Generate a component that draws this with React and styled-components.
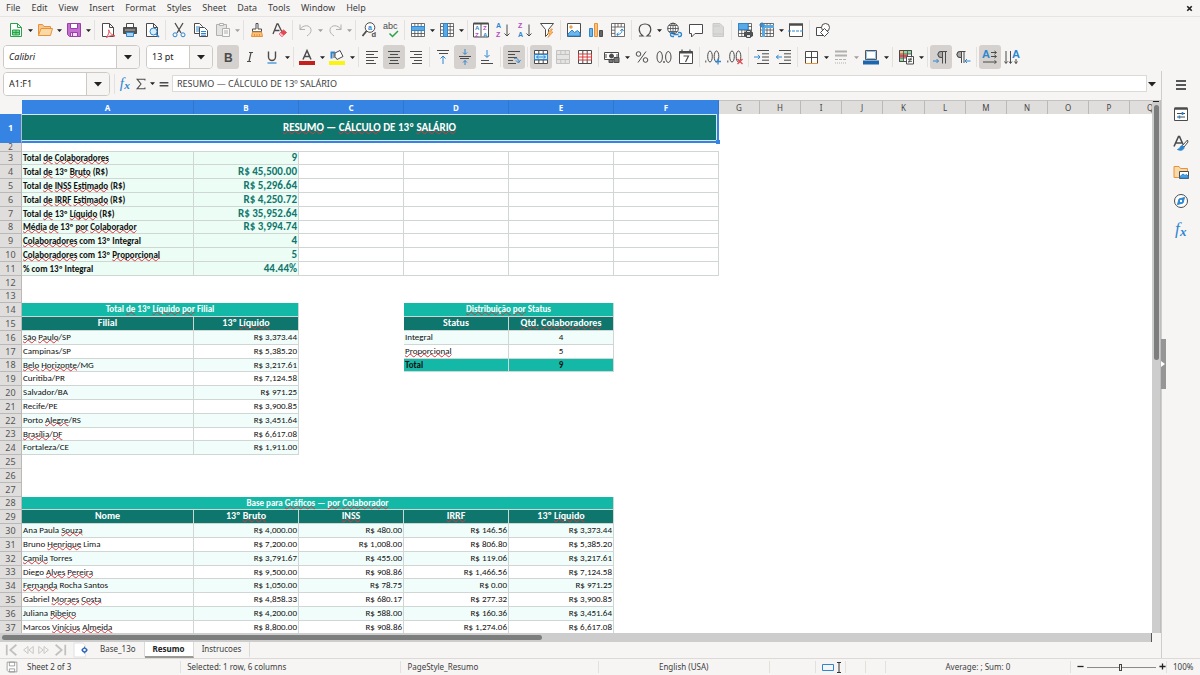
import React from 'react'
import styled, { createGlobalStyle, css } from 'styled-components'

const COLORS = {
  chrome: '#f6f5f4',
  line: '#dcdad7',
  ink: '#3d3d3d',
  blue: '#3584e4',
  iconBlue: '#2d86cf',
  header: '#dfdedd',
  teal: '#0f766e',
  mint: '#14b8a6',
  stripe: '#f0fdfa',
  kpi: '#ecfdf5',
  grid: '#cfd6d4',
  red: '#e0323a',
}

const UI_FONT = "'Noto Sans', 'Open Sans', sans-serif"
const CELL_FONT = "Carlito, Lato, sans-serif"

const GlobalStyle = createGlobalStyle`
  * {
    box-sizing: border-box;
  }
  body {
    margin: 0;
    background: ${COLORS.chrome};
    color: ${COLORS.ink};
    font: 9px/12px ${UI_FONT};
  }
  button, input {
    font: inherit;
    color: inherit;
  }
  button {
    padding: 0;
    border: 0;
    background: none;
  }
`

/* ---------- layout ---------- */

const Window = styled.div`
  display: flex;
  flex-direction: column;
  height: 100vh;
  overflow: hidden;
`

const MenuBar = styled.nav`
  display: flex;
  align-items: center;
  gap: 1px;
  height: 17px;
  flex: none;
  padding-left: 1px;
  border-bottom: 1px solid #e6e4e2;
`

const MenuItem = styled.button`
  padding: 0 5px;
`

const CloseButton = styled.button`
  display: flex;
  margin-left: auto;
  margin-right: 6px;
`

const Toolbar = styled.div`
  display: flex;
  align-items: center;
  flex: none;
  height: ${(p) => (p.$tall ? '28px' : '26px')};
  padding-left: ${(p) => (p.$tall ? '3px' : '5px')};
`

const ToolButton = styled.button`
  display: flex;
  align-items: center;
  justify-content: center;
  flex: none;
  width: 22px;
  height: 24px;
  border-radius: 3px;
  background: ${(p) => (p.$active ? '#d4d1ce' : 'none')};
  opacity: ${(p) => (p.$dim ? 0.4 : 1)};
`

const CaretButton = styled.button`
  display: flex;
  align-items: center;
  justify-content: center;
  flex: none;
  width: ${(p) => (p.$wide ? '8px' : '7px')};
  height: 24px;
  opacity: ${(p) => (p.$dim ? 0.4 : 1)};
`

const Separator = styled.span`
  flex: none;
  width: 1px;
  height: 20px;
  margin: 0 2px;
  background: #e3e1de;
`

const Combo = styled.div`
  display: flex;
  flex: none;
  width: ${(p) => p.$width};
  height: 24px;
  margin-right: ${(p) => p.$gap};
  border: 1px solid #cdc9c5;
  border-radius: 4px;
  background: #fff;
  overflow: hidden;
`

const ComboInput = styled.input`
  flex: 1;
  min-width: 0;
  padding: 0 5px;
  border: 0;
  background: #fff;
  color: #222;
  font-style: ${(p) => (p.$italic ? 'italic' : 'normal')};
`

const ComboButton = styled.button`
  display: flex;
  align-items: center;
  justify-content: center;
  width: 23px;
  border-left: 1px solid #cdc9c5;
  background: ${COLORS.chrome};
`

const Workspace = styled.div`
  display: flex;
  flex: 1;
  min-height: 0;
`

const Main = styled.main`
  display: flex;
  flex-direction: column;
  flex: 1;
  min-width: 0;
`

const FormulaBar = styled.div`
  display: flex;
  align-items: center;
  flex: none;
  height: 29px;
  padding: 0 5px 4px 3px;
`

const FormulaButton = styled.button`
  display: flex;
  align-items: center;
  justify-content: center;
  flex: none;
  width: 16px;
  height: 20px;
`

const FormulaInput = styled.input`
  flex: 1;
  min-width: 0;
  height: 17px;
  margin-right: 1px;
  padding: 0 4px;
  border: 1px solid ${COLORS.line};
  background: #fff;
`

const SheetArea = styled.div`
  display: flex;
  flex: 1;
  min-height: 0;
`

const SheetViewport = styled.div`
  flex: 1;
  min-width: 0;
  overflow: hidden;
  background: #fff;
`

const VerticalScroll = styled.div`
  display: flex;
  flex-direction: column;
  align-items: center;
  flex: none;
  width: 9px;
  padding-top: 1px;
  background: #cdcdcd;
  border-right: 1px solid #bdbdbd;

  &::before {
    content: '';
    width: 6px;
    height: 1px;
    margin-bottom: 3px;
    background: #222;
  }
  &::after {
    content: '';
    width: 5px;
    height: 48%;
    border-radius: 3px;
    background: #7c7d7d;
  }
`

const HorizontalScroll = styled.div`
  display: flex;
  align-items: center;
  flex: none;
  height: 9px;
  margin-right: 9px;
  padding-left: 2px;
  background: #cdcdcd;
  border-right: 1px solid #555;

  &::before {
    content: '';
    width: 47%;
    height: 5px;
    border-radius: 3px;
    background: #7c7d7d;
  }
`

/* ---------- sheet ---------- */

const Sheet = styled.table`
  table-layout: fixed;
  width: 0;
  border-collapse: separate;
  border-spacing: 0;
  font: 9px/12px ${CELL_FONT};
  color: #111;

  th, td {
    padding: 0;
    white-space: nowrap;
  }
`

const ColumnHeader = styled.th`
  height: 14px;
  border-right: 1px solid ${(p) => (p.$selected ? '#2f76cc' : '#bbb9b7')};
  border-top: 1px solid ${(p) => (p.$selected ? COLORS.blue : '#c4c2c0')};
  background: ${(p) => (p.$selected ? COLORS.blue : COLORS.header)};
  color: ${(p) => (p.$selected ? '#fff' : '#444')};
  font-family: ${UI_FONT};
  font-size: 8px;
  font-weight: ${(p) => (p.$selected ? 700 : 400)};
`

const Corner = styled.th`
  background: ${COLORS.chrome};
`

const Row = styled.tr`
  height: ${(p) => p.$height}px;
`

const RowHeader = styled.th`
  border-right: 1px solid #bbb9b7;
  border-bottom: 1px solid ${(p) => (p.$selected ? COLORS.blue : '#bbb9b7')};
  background: ${(p) => (p.$selected ? COLORS.blue : COLORS.header)};
  color: ${(p) => (p.$selected ? '#fff' : '#555')};
  font-family: ${UI_FONT};
  font-size: ${(p) => (p.$short ? '8px' : '9px')};
  line-height: ${(p) => (p.$short ? '8px' : '12px')};
  font-weight: ${(p) => (p.$selected ? 700 : 400)};
  vertical-align: ${(p) => (p.$selected ? 'middle' : 'bottom')};
`

const KINDS = {
  title: css`
    position: relative;
    text-align: center;
    background: ${COLORS.teal};
    color: #fff;
    font-size: 11px;
    font-weight: 700;
    border: 1px solid ${COLORS.blue};
    border-width: 0 2px 2px 0;
    box-shadow: inset 0 1px #d6e9f5, inset -1px -1px #d6e9f5;
    vertical-align: middle;
  `,
  kpiLabel: css`
    background: ${COLORS.kpi};
    font-weight: 700;
    vertical-align: bottom;
  `,
  kpiValue: css`
    background: ${COLORS.kpi};
    color: ${COLORS.teal};
    font-size: 11px;
    font-weight: 700;
    text-align: right;
    vertical-align: bottom;
  `,
  blank: css``,
  ruled: css`
    border-right: 0;
    line-height: 8px;
  `,
  section: css`
    background: ${COLORS.mint};
    color: #fff;
    font-weight: 700;
    text-align: center;
  `,
  head: css`
    background: ${COLORS.teal};
    color: #fff;
    font-size: 10px;
    font-weight: 700;
    text-align: center;
  `,
  text: css``,
  money: css`
    text-align: right;
  `,
  count: css`
    text-align: center;
  `,
  total: css`
    background: ${COLORS.mint};
    font-weight: 700;
  `,
  totalCount: css`
    background: ${COLORS.mint};
    font-weight: 700;
    text-align: center;
  `,
}

const Cell = styled.td`
  && {
    padding: 0 1px;
  }
  border-right: 1px solid ${COLORS.grid};
  border-bottom: 1px solid ${COLORS.grid};
  background: ${(p) => (p.$striped ? COLORS.stripe : '#fff')};
  vertical-align: top;
  ${(p) => KINDS[p.$kind]}
`

const Misspelled = styled.span`
  text-decoration: underline wavy ${COLORS.red} 1px;
  text-decoration-skip-ink: none;
  text-underline-offset: -1px;
`

const FillHandle = styled.span`
  position: absolute;
  right: -3px;
  bottom: -3px;
  width: 4px;
  height: 4px;
  background: ${COLORS.blue};
`

/* ---------- side and bottom ---------- */

const SideBar = styled.aside`
  position: relative;
  display: flex;
  flex-direction: column;
  align-items: center;
  flex: none;
  gap: 5px;
  width: 39px;
  padding-top: 2px;
  border-left: 1px solid #cfcdca;
`

const CollapseHandle = styled.button`
  position: absolute;
  left: -1px;
  top: 268px;
  display: flex;
  align-items: center;
  width: 5px;
  height: 50px;
  background: #969696;
`

const TabBar = styled.div`
  display: flex;
  align-items: stretch;
  flex: none;
  height: 16px;
  padding-left: 4px;
  font-size: 8px;
`

const TabNav = styled.button`
  display: flex;
  align-items: center;
  justify-content: center;
  width: 16px;
  opacity: 0.3;
`

const AddSheet = styled.button`
  display: flex;
  align-items: center;
  margin: 0 4px 0 6px;
`

const Tab = styled.button`
  padding: 0 8px;
  border-right: 1px solid ${COLORS.line};
  border-bottom: 2px solid ${(p) => (p.$active ? '#9a9996' : 'transparent')};
  background: ${(p) => (p.$active ? '#fff' : 'none')};
  color: ${(p) => (p.$active ? '#222' : COLORS.ink)};
  font-weight: ${(p) => (p.$active ? 700 : 400)};
`

const StatusBar = styled.footer`
  display: grid;
  grid-template-columns: 21px 160fr 220fr 197fr 171fr 46px 30px 20px 20px 185fr 96px 33px;
  align-items: center;
  flex: none;
  height: 17px;
  border-top: 1px solid ${COLORS.line};
  font-size: 8px;
`

const StatusItem = styled.div`
  display: flex;
  align-items: center;
  justify-content: ${(p) => (p.$center ? 'center' : 'flex-start')};
  height: 12px;
  padding-left: ${(p) => (p.$center ? '0' : '6px')};
  border-right: ${(p) => (p.$plain ? '0' : `1px solid #e3e1de`)};
  white-space: nowrap;
`

const ZoomSlider = styled.input`
  appearance: none;
  flex: 1;
  min-width: 0;
  height: 10px;
  margin: 0 3px;
  background: none;

  &::-webkit-slider-runnable-track {
    height: 1px;
    background: #8a8a8a;
  }
  &::-webkit-slider-thumb {
    appearance: none;
    width: 3px;
    height: 7px;
    margin-top: -3px;
    border: 1px solid #444;
    background: #eee;
  }
`

/* ---------- icons ---------- */

const K = '#4b4b4b'
const B = COLORS.iconBlue
const R = '#e5484d'
const P = '#b44ac0'
const G = '#2aa34a'
const O = '#e8923a'

const Letter = ({ x, y, size = 8, fill = K, bold, italic, serif, children }) => (
  <text
    x={x}
    y={y}
    fontSize={size}
    fill={fill}
    stroke="none"
    fontFamily={serif ? 'Liberation Serif, serif' : 'Liberation Sans, sans-serif'}
    fontWeight={bold ? 700 : 400}
    fontStyle={italic ? 'italic' : 'normal'}
  >
    {children}
  </text>
)

const Page = <path d="M2.5 1.5h7l4 4v9h-11zM9.5 1.5v4h4" fill="#fff" />
const Grid = (
  <path d="M1.5 1.5h13v13h-13zM1.5 4.5h13M1.5 8h13M1.5 11.5h13M4.8 1.5v13M8 1.5v13M11.2 1.5v13" fill="#fff" strokeWidth=".8" />
)

const ICONS = {
  new: (
    <>
      <path d="M2.5 1.5h7l4 4v9h-11zM9.5 1.5v4h4" fill="#fff" stroke={G} />
      <path d="M4.5 8h7v5h-7zM4.5 10.5h7M8 8v5" fill="#7ed694" stroke={G} />
    </>
  ),
  open: (
    <>
      <path d="M1.5 13.5v-11h4l1.5 2h6.5v2" fill="#f7c88b" stroke={O} />
      <path d="M1.5 13.5l2.5-7h11.5l-2 7z" fill="#fad9a9" stroke={O} />
    </>
  ),
  save: (
    <>
      <path d="M1.5 1.5h13v13h-11l-2-2z" fill="#c46fd0" stroke="#9a3ea8" />
      <path d="M4.5 1.5h7v5h-7z" fill="#fff" stroke="#9a3ea8" />
      <path d="M4.5 10.5h7v4h-7z" fill="#f3dff6" stroke="#9a3ea8" />
      <path d="M6.5 11v3" stroke="#9a3ea8" />
    </>
  ),
  pdf: (
    <>
      {Page}
      <path d="M6.5 15.5c2-3 3-6 2.5-7.5-1-1 0 4 6 6-3-1-6 0-8.5 1.5z" stroke={R} fill="#fff" />
    </>
  ),
  print: (
    <>
      <path d="M4.5 5v-3.5h7v3.5" fill="#fff" />
      <path d="M1.5 5.5h13v6h-13z" fill="#555" />
      <path d="M3 8h10" stroke="#bbb" />
      <path d="M4.5 10.5h7v4h-7z" fill="#a9d4f5" stroke={B} />
    </>
  ),
  preview: (
    <>
      {Page}
      <circle cx="9.5" cy="9.5" r="3.5" fill="#d8edfb" stroke={B} />
      <path d="M12 12l3 3" stroke={B} strokeWidth="1.5" />
    </>
  ),
  cut: (
    <>
      <path d="M4 1l6 10M12 1L6 11" strokeWidth="1.3" />
      <circle cx="4" cy="12.8" r="2" stroke={B} />
      <circle cx="12" cy="12.8" r="2" stroke={B} />
    </>
  ),
  copy: (
    <>
      <path d="M1.5 1.5h5l3 3v7h-8z" fill="#fff" />
      <path d="M3 5h4M3 7h4M3 9h4" stroke={B} />
      <path d="M6.5 5.5h5l3 3v6h-8z" fill="#fff" />
      <path d="M8 9.5h5M8 11.5h5M8 13.2h5" stroke={B} />
    </>
  ),
  paste: (
    <>
      <path d="M1.5 2.5h10v11h-10z" fill="#c9c9c9" />
      <path d="M4.5 1.5h4v2h-4z" fill="#fff" />
      <path d="M7.5 6.5h7v8h-7zM9 9h4M9 11h4" fill="#fff" />
    </>
  ),
  brush: (
    <>
      <path d="M7 1.5h2v5.5h3.5v2.5h-9v-2.5h3.5z" fill="#fff" />
      <path d="M3.5 10h9l1 4.5h-11z" fill="#f9c27f" stroke={O} />
      <path d="M5.5 12v2M8 12v2M10.5 12v2" stroke={O} />
    </>
  ),
  clear: (
    <>
      <path d="M2 12l4-10h1l4 8M3.5 8.5h5" strokeWidth="1.3" />
      <path d="M8 12l4.500-4 3 2.500-4.500 4z" fill={R} stroke={R} />
      <path d="M8 12l1.500-1.300 3 2.600-1.500 1.200z" fill="#fbd" stroke="none" />
    </>
  ),
  undo: <path d="M2 2.5v5h5M2 7.5c3-5 10-5 11 0 .5 3-2 5-4 6.5" />,
  redo: <path d="M14 2.5v5h-5M14 7.5c-3-5-10-5-11 0-.5 3 2 5 4 6.5" />,
  find: (
    <>
      <circle cx="9" cy="5.5" r="4.8" fill="#fff" />
      <path d="M5.5 9L1.5 14" strokeWidth="1.8" />
      <Letter x="7" y="7.5" size="7" fill={B} bold>a</Letter>
      <Letter x="10.5" y="15" size="7.5" bold>d</Letter>
    </>
  ),
  spell: (
    <>
      <Letter x="0" y="7" size="9">abc</Letter>
      <path d="M6.5 11.5l3 3L15 9" stroke={G} strokeWidth="1.5" />
    </>
  ),
  row: (
    <>
      {Grid}
      <path d="M1.5 4.5h13v4h-13z" fill="#5aa9e3" stroke={B} />
    </>
  ),
  column: (
    <>
      {Grid}
      <path d="M4.5 1.5h4v13h-4z" fill="#5aa9e3" stroke={B} />
    </>
  ),
  sort: (
    <>
      <path d="M.5 1.5h15v13.5H.5zM8 1.5v13" fill="#fff" />
      <path d="M.5 1.5h15" strokeWidth="2" />
      <Letter x="2" y="8" size="6" fill={B} bold>A</Letter>
      <Letter x="2" y="14.5" size="6" fill={P} bold>Z</Letter>
      <Letter x="10" y="8" size="6" fill={P} bold>Z</Letter>
      <Letter x="10" y="14.5" size="6" fill={B} bold>A</Letter>
    </>
  ),
  sortAsc: (
    <>
      <Letter x="1" y="6" size="7" fill={B} bold>A</Letter>
      <Letter x="1" y="15" size="7" fill={P} bold>Z</Letter>
      <path d="M12 2.5v11M9.5 11.5l2.5 2.5 2.5-2.5" />
    </>
  ),
  sortDesc: (
    <>
      <Letter x="1" y="6" size="7" fill={P} bold>Z</Letter>
      <Letter x="1" y="15" size="7" fill={B} bold>A</Letter>
      <path d="M12 2.5v11M9.5 11.5l2.5 2.5 2.5-2.5" />
    </>
  ),
  filter: (
    <>
      <path d="M1.5 1.5h13l-5 6v4l-3 3v-7z" fill="#fff" />
      <path d="M12 7l-3.5 4.5h2.5l-2 4 5-5.5h-2.5l2-3z" fill="#fbc27a" stroke={O} strokeWidth=".8" />
    </>
  ),
  image: (
    <>
      <path d="M1.5 1.5h13v13h-13z" fill="#fff" />
      <path d="M2 12l4-4 2.5 2.5 3-2 2.5 2.5v3H2z" fill="#6db6ea" stroke={B} />
      <circle cx="5" cy="5" r="1.2" stroke={O} fill="#fbc27a" />
    </>
  ),
  chart: (
    <>
      <path d="M1.5 6.5h3v8h-3z" fill="#6db6ea" stroke={B} />
      <path d="M6.5 1.5h3v13h-3z" fill="#fbc27a" stroke={O} />
      <path d="M11.5 8.5h3v6h-3z" fill="#666" />
    </>
  ),
  pivot: (
    <>
      <path d="M1.5 1.5h13v13h-13zM1.5 5h13M5 1.5v13M8 1.5v3.5M11.2 1.5v3.5M1.5 8.2H5M1.5 11.4H5" fill="#fff" strokeWidth=".8" />
      <path d="M7 12.5c4 0 5-2 5-5M10.3 9l1.7-2 1.7 2M8.5 10.8l-1.8 1.7 1.8 1.7" stroke={B} />
    </>
  ),
  omega: <path d="M2 14h4c-2.5-2-3.8-4-3.8-6.5C2.2 4 4.5 2 8 2s5.8 2 5.8 5.5C13.8 10 12.5 12 10 14h4" strokeWidth="1.2" />,
  link: (
    <>
      <circle cx="7" cy="6.5" r="5.3" fill="#fff" />
      <path d="M1.5 6.5h11M7 1.2v10.5M3 3.5h8M3 9.5h8" strokeWidth=".8" />
      <ellipse cx="7" cy="6.5" rx="2.5" ry="5.3" strokeWidth=".8" />
      <path d="M8 10.5h-1.5a2 2 0 0 0 0 4H8M12 10.5h1.5a2 2 0 0 1 0 4H12M7.5 12.5h5" stroke={B} strokeWidth="1.3" />
    </>
  ),
  comment: <path d="M1.5 2.5h13v9H7l-3.5 3.5v-3.5h-2z" fill="#fff" />,
  headers: <path d="M3 1.5h7l3.5 3.5v9.5H3zM3 4h7M3 12h10" fill="#b0b0b0" stroke="#888" />,
  printArea: (
    <>
      {Grid}
      <path d="M1.5 1.5h9.5v6H1.5z" fill="#5aa9e3" stroke={B} />
      <path d="M7.5 10.5h8v3.5h-8z" fill="#555" />
      <path d="M9.5 8.5h4v2h-4zM9.5 12.5h4v3h-4z" fill="#cfe7fa" />
    </>
  ),
  freeze: (
    <>
      {Grid}
      <path d="M4 4.5h11M4.5 4v11" stroke="#5aa9e3" strokeWidth="3" />
      <path d="M3 0v6M0 3h6M1 1l4 4M5 1L1 5" stroke={B} strokeWidth=".8" />
    </>
  ),
  split: (
    <>
      <path d="M1.5 2.5h13v12h-13z" fill="#fff" />
      <path d="M1 2.5h14" strokeWidth="2.5" />
      <path d="M0 9h16" stroke={B} strokeDasharray="3 1" />
    </>
  ),
  shapes: (
    <>
      <path d="M1.5 5.5h8v8h-8z" fill="#fff" />
      <circle cx="10.5" cy="5.5" r="4" fill="#fff" />
      <path d="M9.5 6.5l4 4-4 4-4-4z" fill="#fff" />
    </>
  ),
  bold: <Letter x="4" y="12.5" size="12" bold>B</Letter>,
  italic: <path d="M7 3.5h4M5 12.5h4M9 3.5l-2 9" strokeWidth="1.2" />,
  underline: (
    <>
      <path d="M4.5 2.5v5.5a3.5 3.5 0 0 0 7 0v-5.5" strokeWidth="1.4" />
      <path d="M3.5 14h9" stroke={B} strokeWidth="1.2" />
    </>
  ),
  fontColor: (
    <>
      <path d="M4 10.5L8 1.5l4 9M5.5 7.5h5" strokeWidth="1.5" />
      <path d="M0 14h16" stroke="#c4201d" strokeWidth="4" />
    </>
  ),
  highlight: (
    <>
      <path d="M6 4l5-2.5 3 6-6 3-2-3zM5 9V3.5" fill="#fff" />
      <path d="M2.5 9.5v-6h3.5" stroke={B} strokeWidth="2" />
      <path d="M0 14h16" stroke="#fbf410" strokeWidth="4" />
    </>
  ),
  alignLeft: <path d="M2 2.5h12M2 5.5h8M2 8.5h12M2 11.5h8M2 14.5h10" />,
  alignCenter: <path d="M2 2.5h12M4 5.5h8M2 8.5h12M4 11.5h8M3 14.5h10" />,
  alignRight: <path d="M2 2.5h12M6 5.5h8M2 8.5h12M6 11.5h8M4 14.5h10" />,
  alignTop: (
    <>
      <path d="M2 1.5h12M4 4.5h9" />
      <path d="M8 15V7.5M5.5 9.5L8 7l2.5 2.5" stroke={B} />
    </>
  ),
  alignMiddle: (
    <>
      <path d="M2 7.5h12M3 9.5h9" />
      <path d="M8 0v5M6 3.5l2 2 2-2M8 16v-4.5M6 13.5l2-2 2 2" stroke={B} />
    </>
  ),
  alignBottom: (
    <>
      <path d="M2 11.5h8M2 14.5h12" />
      <path d="M8 1v7M5.5 6L8 8.5 10.5 6" stroke={B} />
    </>
  ),
  wrap: (
    <>
      <path d="M2 2.5h12M2 5.5h7M2 8.5h9M2 11.5h5M2 14.5h8" />
      <path d="M8 9.5c3-1 4 0 4.5 3M10 11.5l2.5 2.5 2-3" stroke={B} />
    </>
  ),
  merge: (
    <>
      <path d="M1.5 1.5h13v13h-13zM1.5 5h13M1.5 11h13M5.8 1.5V5M10.2 1.5V5M5.8 11v3.5M10.2 11v3.5" fill="#fff" />
      <path d="M1.5 5.5h13v5h-13z" fill="#d5ebfb" stroke={B} />
      <path d="M3.5 8h9M5.5 6.3L3.5 8l2 1.7M10.5 6.3l2 1.7-2 1.7" stroke={B} />
    </>
  ),
  unmerge: (
    <path d="M1.5 1.5h13v4h-13zM1.5 5.5h13v5h-13zM1.5 10.5h13v4h-13zM5.8 1.5v4M10.2 1.5v4M5.8 10.5v4M10.2 10.5v4" fill="#ccc" stroke="#777" />
  ),
  splitCells: (
    <>
      <path d="M1.5 1.5h13v13h-13zM5.8 1.5V5M10.2 1.5V5M5.8 11v3.5M10.2 11v3.5" fill="#fff" />
      <path d="M1.5 5h13v6h-13zM1.5 8h13M5.8 5v6M10.2 5v6" fill="#fff" stroke="#d23b3b" />
    </>
  ),
  currency: (
    <>
      <path d="M.5 3.5h14v7H.5z" fill="#fff" />
      <circle cx="7.5" cy="7" r="2" fill={K} />
      <path d="M2 5v4M13 5v4" />
      <path d="M5 10.5h4v3H5zM10 8.5h5v5h-5z" fill="#777" />
    </>
  ),
  percent: (
    <>
      <circle cx="4.5" cy="5" r="2.3" />
      <circle cx="11.5" cy="11" r="2.3" />
      <path d="M12 2.5L4 13.5" />
    </>
  ),
  number: (
    <>
      <ellipse cx="3.7" cy="8" rx="2.7" ry="5.5" />
      <ellipse cx="12.3" cy="8" rx="2.7" ry="5.5" />
      <path d="M8 12v2" strokeWidth="1.3" />
    </>
  ),
  date: (
    <>
      <path d="M1.5 2.5h13v12h-13z" fill="#fff" />
      <path d="M1.5 3.5h13" strokeWidth="2" />
      <path d="M4 .5v2.5M12 .5v2.5M5.5 7h5l-3 6" strokeWidth="1.2" />
    </>
  ),
  addDecimal: (
    <>
      <path d="M.8 11.5v2" />
      <ellipse cx="5" cy="7.5" rx="2.3" ry="5.5" />
      <ellipse cx="11.5" cy="7.5" rx="2.3" ry="5.5" />
      <path d="M10 12.5h6M13 9.5v6" stroke={B} strokeWidth="1.3" />
    </>
  ),
  removeDecimal: (
    <>
      <path d="M.8 11.5v2" />
      <ellipse cx="5" cy="7.5" rx="2.3" ry="5.5" />
      <ellipse cx="11.5" cy="7.5" rx="2.3" ry="5.5" />
      <path d="M10.5 10l5 5M15.5 10l-5 5" stroke={R} strokeWidth="1.3" />
    </>
  ),
  indent: (
    <>
      <path d="M3 1.5h12M8 4.8h7M8 8h7M8 11.2h7M3 14.5h12" />
      <path d="M0 8h6M4 5.8L6 8l-2 2.2" stroke={B} />
    </>
  ),
  outdent: (
    <>
      <path d="M3 1.5h12M8 4.8h7M8 8h7M8 11.2h7M3 14.5h12" />
      <path d="M6 8H0M2.5 5.8L.5 8l2 2.2" stroke={B} />
    </>
  ),
  borders: (
    <>
      <path d="M2.5 2.5h12v12h-12zM8.5 2.5v12M2.5 8.5h12" fill="#fff" />
      <path d="M2 14.5h13" stroke={O} />
    </>
  ),
  lineStyle: (
    <>
      <path d="M2 2.5h12M2 6.5h12" strokeWidth="1.8" />
      <path d="M2 10.5h12" strokeDasharray="3 1" />
      <path d="M2 14h12" strokeDasharray="1 1" />
    </>
  ),
  borderColor: (
    <>
      <path d="M2.5 1.5h11v9h-11z" fill="#fff" stroke="#555" />
      <path d="M3.5 2.5h9v7h-9z" stroke="#8cc3ef" />
      <path d="M0 13.5h16" stroke="#1f65ad" strokeWidth="4" />
    </>
  ),
  conditional: (
    <>
      <path d="M1.5 1.5h12v11h-12z" fill="#fff" />
      <path d="M2 2h4v3H2z" fill="#f5c27d" stroke="none" />
      <path d="M6 2h7v3H6zM2 9h4v3H2z" fill="#8edba0" stroke="none" />
      <path d="M2 5.5h8v3H2z" fill={R} stroke="none" />
      <path d="M1.5 1.5h12v11h-12zM1.5 5h12M1.5 9h12M5.5 1.5v11M9.5 1.5v11" strokeWidth=".8" />
      <path d="M8.5 7.5h7v7.5h-7z" fill="#fff" />
      <path d="M10 10.2h4M10 12.3h4M13.3 8.7l-2.6 5" />
    </>
  ),
  ltr: (
    <>
      <path d="M14 2.5H8a3 3 0 0 0 0 6h1M9.5 2.5v12M12.5 2.5v12" />
      <path d="M8 2.5a3 3 0 0 0 0 6h1.5v-6z" fill="#aaa" />
      <path d="M0 12h5.5M3.5 10l2 2-2 2" stroke={B} />
    </>
  ),
  rtl: (
    <>
      <path d="M10.5 2.5H5a3 3 0 0 0 0 6h1.5M6.5 2.5V14M9 2.5V14" />
      <path d="M5 2.5a3 3 0 0 0 0 6h1.5v-6z" fill="#aaa" />
      <path d="M15.5 12H10M12 10l-2 2 2 2" stroke={B} />
    </>
  ),
  horizontalText: (
    <>
      <Letter x="0" y="9" size="11" fill={B} bold>A</Letter>
      <path d="M9 3.5h5M12.5 2l2 1.5-2 1.5M9 7.5h5M12.5 6l2 1.5-2 1.5M1 13h13M12.5 11.5l2 1.5-2 1.5" />
    </>
  ),
  verticalText: (
    <>
      <Letter x="8" y="9" size="11" fill={B} bold>A</Letter>
      <path d="M2 2v12M.5 12.5L2 14.5l1.5-2M6.5 2v12M5 12.5l1.5 2 1.5-2M12 10v4.5M10.5 12.5l1.5 2 1.5-2" />
    </>
  ),
  fx: (
    <>
      <Letter x="2" y="12" size="17" fill={B} italic serif>f</Letter>
      <Letter x="7" y="14" size="13" fill={B} italic serif bold>x</Letter>
    </>
  ),
  sigma: <path d="M12.5 4V2.5h-9L8 8l-4.500 5.500h9V12" strokeWidth="1.200" />,
  equals: <path d="M3 6.5h10M3 10h10" strokeWidth="1.6" />,
  menu: <path d="M3 4h10M3 8h10M3 12h10" strokeWidth="1.6" stroke="#222" />,
  properties: (
    <>
      <path d="M1.5 2.5h13v12h-13z" fill="#fff" />
      <path d="M1.5 2.5h13" strokeWidth="2.5" />
      <path d="M4 7.5h8M4 11h8" />
      <path d="M9.5 6v3M6.5 9.5v3" stroke={B} strokeWidth="1.6" />
    </>
  ),
  styles: (
    <>
      <path d="M1 11.5L5.5 1.5h1l3.5 8M3 8h5.5" strokeWidth="1.6" />
      <path d="M14.5 5l-5 5.5 1.5 1.5 4-5z" fill="#fff" />
      <path d="M9.5 10.5c-3 .5-2 3.5-5 4 3 1.5 7 .5 6.5-2.5z" fill={B} stroke={B} />
    </>
  ),
  gallery: (
    <>
      <path d="M1 13.5v-11h5l1.5 2h7v9z" fill="#fad9a9" stroke={O} />
      <path d="M6.5 7.5h9v7h-9z" fill="#fff" />
      <path d="M7 12.5l3-2.5 2 1.5 1.5-1 1.5 1.5v2H7z" fill="#4b9fe0" stroke={B} />
    </>
  ),
  navigator: (
    <>
      <circle cx="8" cy="8" r="6.5" fill="#fff" />
      <path d="M11.5 4.5l-1.5 5.5-5.5 1.5L6 6z" fill={B} stroke={B} />
      <circle cx="8" cy="8" r="1.2" fill="#fff" stroke="none" />
    </>
  ),
  close: <path d="M4 4l8 8M12 4l-8 8" stroke="#222" strokeWidth="3" />,
  first: <path d="M2 2v12M13 2L6 8l7 6" strokeWidth="2" />,
  previous: <path d="M8 4L3 8l5 4zM14 4L9 8l5 4z" />,
  next: <path d="M2 4l5 4-5 4zM8 4l5 4-5 4z" />,
  last: <path d="M14 2v12M3 2l7 6-7 6" strokeWidth="2" />,
  addSheet: (
    <>
      <path d="M0 0h10l3 3v13H0z" fill="#fff" stroke="#ddd" />
      <circle cx="12" cy="8" r="2.2" stroke="#2b62b8" strokeWidth="1.5" fill="#fff" />
      <path d="M12 4v2M12 10v2M8 8h2M14 8h2" stroke="#2b62b8" />
    </>
  ),
  document: (
    <path d="M1.5 1.5h13v13h-11l-2-2zM4.5 1.5h7v5h-7zM4.5 10.5h7v4h-7z" stroke="#888" fill="#fff" />
  ),
  minus: <path d="M1 8h14" strokeWidth="3" stroke="#222" />,
  plus: <path d="M1 8h14M8 1v14" strokeWidth="3" stroke="#222" />,
}

const IconSvg = styled.svg`
  overflow: visible;
`

const Icon = ({ name, size = 16 }) => (
  <IconSvg width={size} height={size} viewBox="0 0 16 16" fill="none" stroke={K} aria-hidden="true">
    {ICONS[name]}
  </IconSvg>
)

const Arrow = ({ size = 5 }) => (
  <svg width={size} height={size} viewBox="0 0 10 10" aria-hidden="true">
    <path d="M0 2.5h10l-5 5.5z" fill="#222" />
  </svg>
)

/* ---------- data ---------- */

const MENUS = ['File', 'Edit', 'View', 'Insert', 'Format', 'Styles', 'Sheet', 'Data', 'Tools', 'Window', 'Help']

// "|" separates groups, "+" adds an arrow, "*" is pressed, "-" is disabled
const STANDARD_TOOLS =
  'new+ open+ save+ | pdf print preview | cut copy paste-+ | brush clear | undo-+ redo-+ | find spell | row+ column+ | sort sortAsc sortDesc filter | image chart pivot | omega+ link comment headers- | printArea freeze+ split | shapes'

const FORMAT_TOOLS =
  'bold* italic underline+ | fontColor+ highlight+ | alignLeft alignCenter* alignRight | alignTop alignMiddle* alignBottom | wrap* | merge* unmerge- splitCells | currency+ percent number date | addDecimal removeDecimal | indent outdent | borders+ lineStyle-+ borderColor+ | conditional+ | ltr* rtl | horizontalText* verticalText'

const PANELS = ['menu', 'properties', 'styles', 'gallery', 'navigator', 'fx']

const COLUMNS = [
  ['A', 172], ['B', 105], ['C', 105], ['D', 105], ['E', 105], ['F', 105],
  ['G', 41], ['H', 41], ['I', 41], ['J', 41], ['K', 42], ['L', 41],
  ['M', 41], ['N', 41], ['O', 41], ['P', 41], ['Q', 41],
]
const SELECTED_COLUMNS = 'ABCDEF'

const KPIS = [
  ['Total ~de~ ~Colaboradores~', '9'],
  ['Total ~de~ 13º ~Bruto~ (R$)', 'R$ 45,500.00'],
  ['Total ~de~ ~INSS~ ~Estimado~ (R$)', 'R$ 5,296.64'],
  ['Total ~de~ ~IRRF~ ~Estimado~ (R$)', 'R$ 4,250.72'],
  ['Total ~de~ 13º ~Líquido~ (R$)', 'R$ 35,952.64'],
  ['~Média~ ~de~ 13º ~por~ ~Colaborador~', 'R$ 3,994.74'],
  ['~Colaboradores~ com 13º Integral', '4'],
  ['~Colaboradores~ com 13º ~Proporcional~', '5'],
  ['% com 13º Integral', '44.44%'],
]

const BRANCHES = [
  ['~São~ ~Paulo~/SP', 'R$ 3,373.44'],
  ['Campinas/SP', 'R$ 5,385.20'],
  ['~Belo~ ~Horizonte~/MG', 'R$ 3,217.61'],
  ['Curitiba/PR', 'R$ 7,124.58'],
  ['Salvador/BA', 'R$ 971.25'],
  ['Recife/PE', 'R$ 3,900.85'],
  ['Porto ~Alegre~/RS', 'R$ 3,451.64'],
  ['~Brasília~/~DF~', 'R$ 6,617.08'],
  ['Fortaleza/CE', 'R$ 1,911.00'],
]

const PEOPLE = [
  ['Ana Paula ~Souza~', 'R$ 4,000.00', 'R$ 480.00', 'R$ 146.56', 'R$ 3,373.44'],
  ['Bruno ~Henrique~ Lima', 'R$ 7,200.00', 'R$ 1,008.00', 'R$ 806.80', 'R$ 5,385.20'],
  ['~Camila~ Torres', 'R$ 3,791.67', 'R$ 455.00', 'R$ 119.06', 'R$ 3,217.61'],
  ['Diego ~Alves~ ~Pereira~', 'R$ 9,500.00', 'R$ 908.86', 'R$ 1,466.56', 'R$ 7,124.58'],
  ['~Fernanda~ Rocha Santos', 'R$ 1,050.00', 'R$ 78.75', 'R$ 0.00', 'R$ 971.25'],
  ['Gabriel ~Moraes~ ~Costa~', 'R$ 4,858.33', 'R$ 680.17', 'R$ 277.32', 'R$ 3,900.85'],
  ['Juliana ~Ribeiro~', 'R$ 4,200.00', 'R$ 588.00', 'R$ 160.36', 'R$ 3,451.64'],
  ['Marcos ~Vinícius~ ~Almeida~', 'R$ 8,800.00', 'R$ 908.86', 'R$ 1,274.06', 'R$ 6,617.08'],
]

const cell = (kind, text, span = 1) => ({ kind, text, span })
const GAP = { kind: null, span: 1 }

const ROWS = {
  1: [cell('title', '~RESUMO~ — ~CÁLCULO~ DE 13º ~SALÁRIO~', 6)],
  2: [cell('ruled', '', 6)],
  14: [cell('section', 'Total ~de~ 13º ~Líquido~ ~por~ Filial', 2), GAP, cell('section', '~Distribuição~ ~por~ Status', 2)],
  15: [cell('head', 'Filial'), cell('head', '13º ~Líquido~'), GAP, cell('head', 'Status'), cell('head', '~Qtd.~ ~Colaboradores~')],
  28: [cell('section', 'Base para ~Gráficos~ — ~por~ ~Colaborador~', 5)],
  29: [cell('head', 'Nome'), cell('head', '13º ~Bruto~'), cell('head', '~INSS~'), cell('head', '~IRRF~'), cell('head', '13º ~Líquido~')],
}

KPIS.forEach(([label, value], i) => {
  ROWS[3 + i] = [
    cell('kpiLabel', label),
    cell('kpiValue', value),
    cell('blank'), cell('blank'), cell('blank'), cell('blank'),
  ]
})
BRANCHES.forEach(([name, value], i) => {
  ROWS[16 + i] = [cell('text', name), cell('money', value)]
})
ROWS[16].push(GAP, cell('text', 'Integral'), cell('count', '4'))
ROWS[17].push(GAP, cell('text', '~Proporcional~'), cell('count', '5'))
ROWS[18].push(GAP, cell('total', 'Total'), cell('totalCount', '9'))
PEOPLE.forEach(([name, ...values], i) => {
  ROWS[30 + i] = [cell('text', name), ...values.map((value) => cell('money', value))]
})

const rowHeight = (number) => {
  if (number === 1) return 29
  if (number === 2) return 9
  return number % 5 === 3 ? 13 : 14
}

/* ---------- components ---------- */

const Tools = ({ tools, wide }) =>
  tools.split(' ').map((token, index) => {
    if (token === '|') return <Separator key={index} />
    const name = token.replace(/[^a-zA-Z]/g, '')
    const dim = token.includes('-')
    return (
      <React.Fragment key={index}>
        <ToolButton aria-label={name} $active={token.includes('*')} $dim={dim} disabled={dim}>
          <Icon name={name} />
        </ToolButton>
        {token.includes('+') && (
          <CaretButton aria-label={name + ' options'} $wide={wide} $dim={dim}>
            <Arrow />
          </CaretButton>
        )}
      </React.Fragment>
    )
  })

const ComboBox = ({ label, value, width, gap, italic }) => (
  <Combo $width={width} $gap={gap}>
    <ComboInput aria-label={label} defaultValue={value} $italic={italic} />
    <ComboButton aria-label={label + ' list'}>
      <Arrow size={8} />
    </ComboButton>
  </Combo>
)

const CellText = ({ text = '' }) =>
  text.split('~').map((part, i) => (i % 2 ? <Misspelled key={i}>{part}</Misspelled> : part))

const SheetRow = ({ number }) => {
  const cells = ROWS[number] || []
  const used = cells.reduce((sum, c) => sum + c.span, 0)
  return (
    <Row $height={rowHeight(number)}>
      <RowHeader scope="row" $selected={number === 1} $short={number === 2}>
        {number}
      </RowHeader>
      {cells.map((c, i) =>
        c.kind ? (
          <Cell key={i} colSpan={c.span} $kind={c.kind} $striped={number >= 16 && number % 2 === 0}>
            <CellText text={c.text} />
            {c.kind === 'title' && <FillHandle />}
          </Cell>
        ) : (
          <td key={i} />
        )
      )}
      <td colSpan={COLUMNS.length - used} />
    </Row>
  )
}

const Spreadsheet = () => (
  <Sheet>
    <colgroup>
      <col style={{ width: 22 }} />
      {COLUMNS.map(([name, width]) => (
        <col key={name} style={{ width }} />
      ))}
    </colgroup>
    <thead>
      <tr>
        <Corner />
        {COLUMNS.map(([name]) => (
          <ColumnHeader key={name} scope="col" $selected={SELECTED_COLUMNS.includes(name)}>
            {name}
          </ColumnHeader>
        ))}
      </tr>
    </thead>
    <tbody>
      {Array.from({ length: 37 }, (_, i) => (
        <SheetRow key={i} number={i + 1} />
      ))}
    </tbody>
  </Sheet>
)

const App = () => (
  <Window>
    <GlobalStyle />
    <MenuBar>
      {MENUS.map((menu) => (
        <MenuItem key={menu}>{menu}</MenuItem>
      ))}
      <CloseButton aria-label="close">
        <Icon name="close" size={9} />
      </CloseButton>
    </MenuBar>
    <Toolbar>
      <Tools tools={STANDARD_TOOLS} />
    </Toolbar>
    <Toolbar $tall>
      <ComboBox label="Font name" value="Calibri" width="137px" gap="6px" italic />
      <ComboBox label="Font size" value="13 pt" width="67px" gap="4px" />
      <Tools tools={FORMAT_TOOLS} wide />
    </Toolbar>
    <Workspace>
      <Main>
        <FormulaBar>
          <ComboBox label="Name box" value="A1:F1" width="107px" gap="2px" />
          <Separator />
          <FormulaButton aria-label="Function wizard">
            <Icon name="fx" size={14} />
          </FormulaButton>
          <FormulaButton aria-label="Select function">
            <Icon name="sigma" size={14} />
          </FormulaButton>
          <CaretButton aria-label="Select function options">
            <Arrow />
          </CaretButton>
          <FormulaButton aria-label="Formula">
            <Icon name="equals" size={14} />
          </FormulaButton>
          <FormulaInput aria-label="Input line" defaultValue="RESUMO — CÁLCULO DE 13º SALÁRIO" />
          <CaretButton aria-label="Expand formula bar" $wide>
            <Arrow size={8} />
          </CaretButton>
        </FormulaBar>
        <SheetArea>
          <SheetViewport>
            <Spreadsheet />
          </SheetViewport>
          <VerticalScroll />
        </SheetArea>
        <HorizontalScroll />
        <TabBar>
          {['first', 'previous', 'next', 'last'].map((name) => (
            <TabNav key={name} aria-label={name + ' sheet'}>
              <Icon name={name} size={14} />
            </TabNav>
          ))}
          <AddSheet aria-label="add sheet">
            <Icon name="addSheet" size={14} />
          </AddSheet>
          <Tab>Base_13o</Tab>
          <Tab $active>Resumo</Tab>
          <Tab>Instrucoes</Tab>
        </TabBar>
      </Main>
      <SideBar>
        {PANELS.map((name) => (
          <ToolButton key={name} aria-label={name}>
            <Icon name={name} />
          </ToolButton>
        ))}
        <CollapseHandle aria-label="hide sidebar">
          <svg width="4" height="6" viewBox="0 0 4 6" aria-hidden="true">
            <path d="M0 0l4 3-4 3z" fill="#fff" />
          </svg>
        </CollapseHandle>
      </SideBar>
    </Workspace>
    <StatusBar>
      <StatusItem $plain>
        <Icon name="document" size={12} />
      </StatusItem>
      <StatusItem>Sheet 2 of 3</StatusItem>
      <StatusItem>Selected: 1 row, 6 columns</StatusItem>
      <StatusItem>PageStyle_Resumo</StatusItem>
      <StatusItem $center>English (USA)</StatusItem>
      <StatusItem />
      <StatusItem>
        <svg width="20" height="12" viewBox="0 0 20 12" fill="none" aria-hidden="true">
          <path d="M.5 3.5h11v6H.5z" stroke={B} />
          <path d="M15 1.5h4M15 11.5h4M17 1.5v10" stroke="#333" />
        </svg>
      </StatusItem>
      <StatusItem />
      <StatusItem />
      <StatusItem $center>Average: ; Sum: 0</StatusItem>
      <StatusItem>
        <button aria-label="zoom out">
          <Icon name="minus" size={7} />
        </button>
        <ZoomSlider type="range" aria-label="Zoom" min="0" max="100" defaultValue="49" />
        <button aria-label="zoom in">
          <Icon name="plus" size={7} />
        </button>
      </StatusItem>
      <StatusItem $plain>100%</StatusItem>
    </StatusBar>
  </Window>
)

export default App
